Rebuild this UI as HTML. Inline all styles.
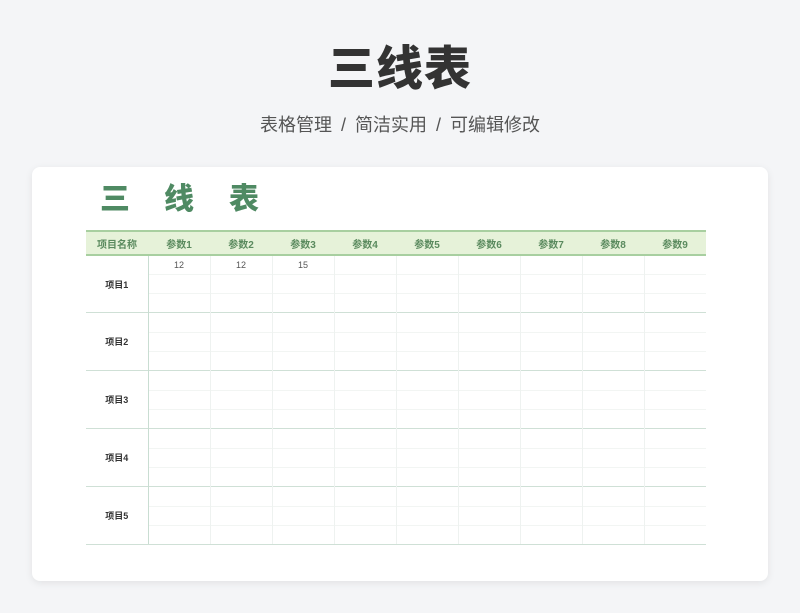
<!DOCTYPE html>
<html><head><meta charset="utf-8"><style>
*{margin:0;padding:0;box-sizing:border-box}
body{width:800px;height:613px;background:#f4f5f7;font-family:"Liberation Sans","Noto Sans CJK SC",sans-serif;position:relative;overflow:hidden}
h1{position:absolute;top:30px;left:0;width:800px;text-align:center;font-size:47px;font-weight:900;color:#333;letter-spacing:1px}
.sub{position:absolute;top:111px;left:0;width:800px;text-align:center;font-size:18px;color:#555;word-spacing:4px}
.card{position:absolute;left:32px;top:167px;width:736px;height:414px;background:#fff;border-radius:8px;box-shadow:0 2px 8px rgba(0,0,0,.08)}
.t{position:absolute;top:174px;font-size:30px;font-weight:900;color:#4f8a63}
table{position:absolute;left:86px;top:230px;width:620px;border-collapse:collapse;table-layout:fixed}
th{height:24px;background:#e6f2d9;color:#5a8a5e;font-size:10px;font-weight:bold;border-top:2px solid #a8cfa0;border-bottom:2px solid #a8cfa0;width:62px;padding:0}
td{height:19.33px;border-left:1px solid #eef2f0;border-top:1px solid #f2f5f3;font-size:9px;color:#555;text-align:center;padding:0}
td.n{border-left:none;font-weight:bold;color:#333;font-size:9px}
td.c1{border-left:1px solid #c9ddd2}
tr.g td{border-top:1px solid #cfe0d6}
tr.last td{border-bottom:1px solid #cfe0d6}
</style></head><body>
<h1>三线表</h1>
<div class="sub">表格管理 / 简洁实用 / 可编辑修改</div>
<div class="card"></div>
<div class="t" style="left:100px">三</div>
<div class="t" style="left:164px">线</div>
<div class="t" style="left:229px">表</div>
<table>
<tr><th>项目名称</th><th>参数1</th><th>参数2</th><th>参数3</th><th>参数4</th><th>参数5</th><th>参数6</th><th>参数7</th><th>参数8</th><th>参数9</th></tr>
<tr class="g"><td class="n" rowspan="3">项目1</td><td class="c1">12</td><td>12</td><td>15</td><td></td><td></td><td></td><td></td><td></td><td></td></tr>
<tr><td class="c1"></td><td></td><td></td><td></td><td></td><td></td><td></td><td></td><td></td></tr>
<tr><td class="c1"></td><td></td><td></td><td></td><td></td><td></td><td></td><td></td><td></td></tr>
<tr class="g"><td class="n" rowspan="3">项目2</td><td class="c1"></td><td></td><td></td><td></td><td></td><td></td><td></td><td></td><td></td></tr>
<tr><td class="c1"></td><td></td><td></td><td></td><td></td><td></td><td></td><td></td><td></td></tr>
<tr><td class="c1"></td><td></td><td></td><td></td><td></td><td></td><td></td><td></td><td></td></tr>
<tr class="g"><td class="n" rowspan="3">项目3</td><td class="c1"></td><td></td><td></td><td></td><td></td><td></td><td></td><td></td><td></td></tr>
<tr><td class="c1"></td><td></td><td></td><td></td><td></td><td></td><td></td><td></td><td></td></tr>
<tr><td class="c1"></td><td></td><td></td><td></td><td></td><td></td><td></td><td></td><td></td></tr>
<tr class="g"><td class="n" rowspan="3">项目4</td><td class="c1"></td><td></td><td></td><td></td><td></td><td></td><td></td><td></td><td></td></tr>
<tr><td class="c1"></td><td></td><td></td><td></td><td></td><td></td><td></td><td></td><td></td></tr>
<tr><td class="c1"></td><td></td><td></td><td></td><td></td><td></td><td></td><td></td><td></td></tr>
<tr class="g"><td class="n" rowspan="3" style="border-bottom:1px solid #cfe0d6">项目5</td><td class="c1"></td><td></td><td></td><td></td><td></td><td></td><td></td><td></td><td></td></tr>
<tr><td class="c1"></td><td></td><td></td><td></td><td></td><td></td><td></td><td></td><td></td></tr>
<tr class="last"><td class="c1"></td><td></td><td></td><td></td><td></td><td></td><td></td><td></td><td></td></tr>
</table>
</body></html>
